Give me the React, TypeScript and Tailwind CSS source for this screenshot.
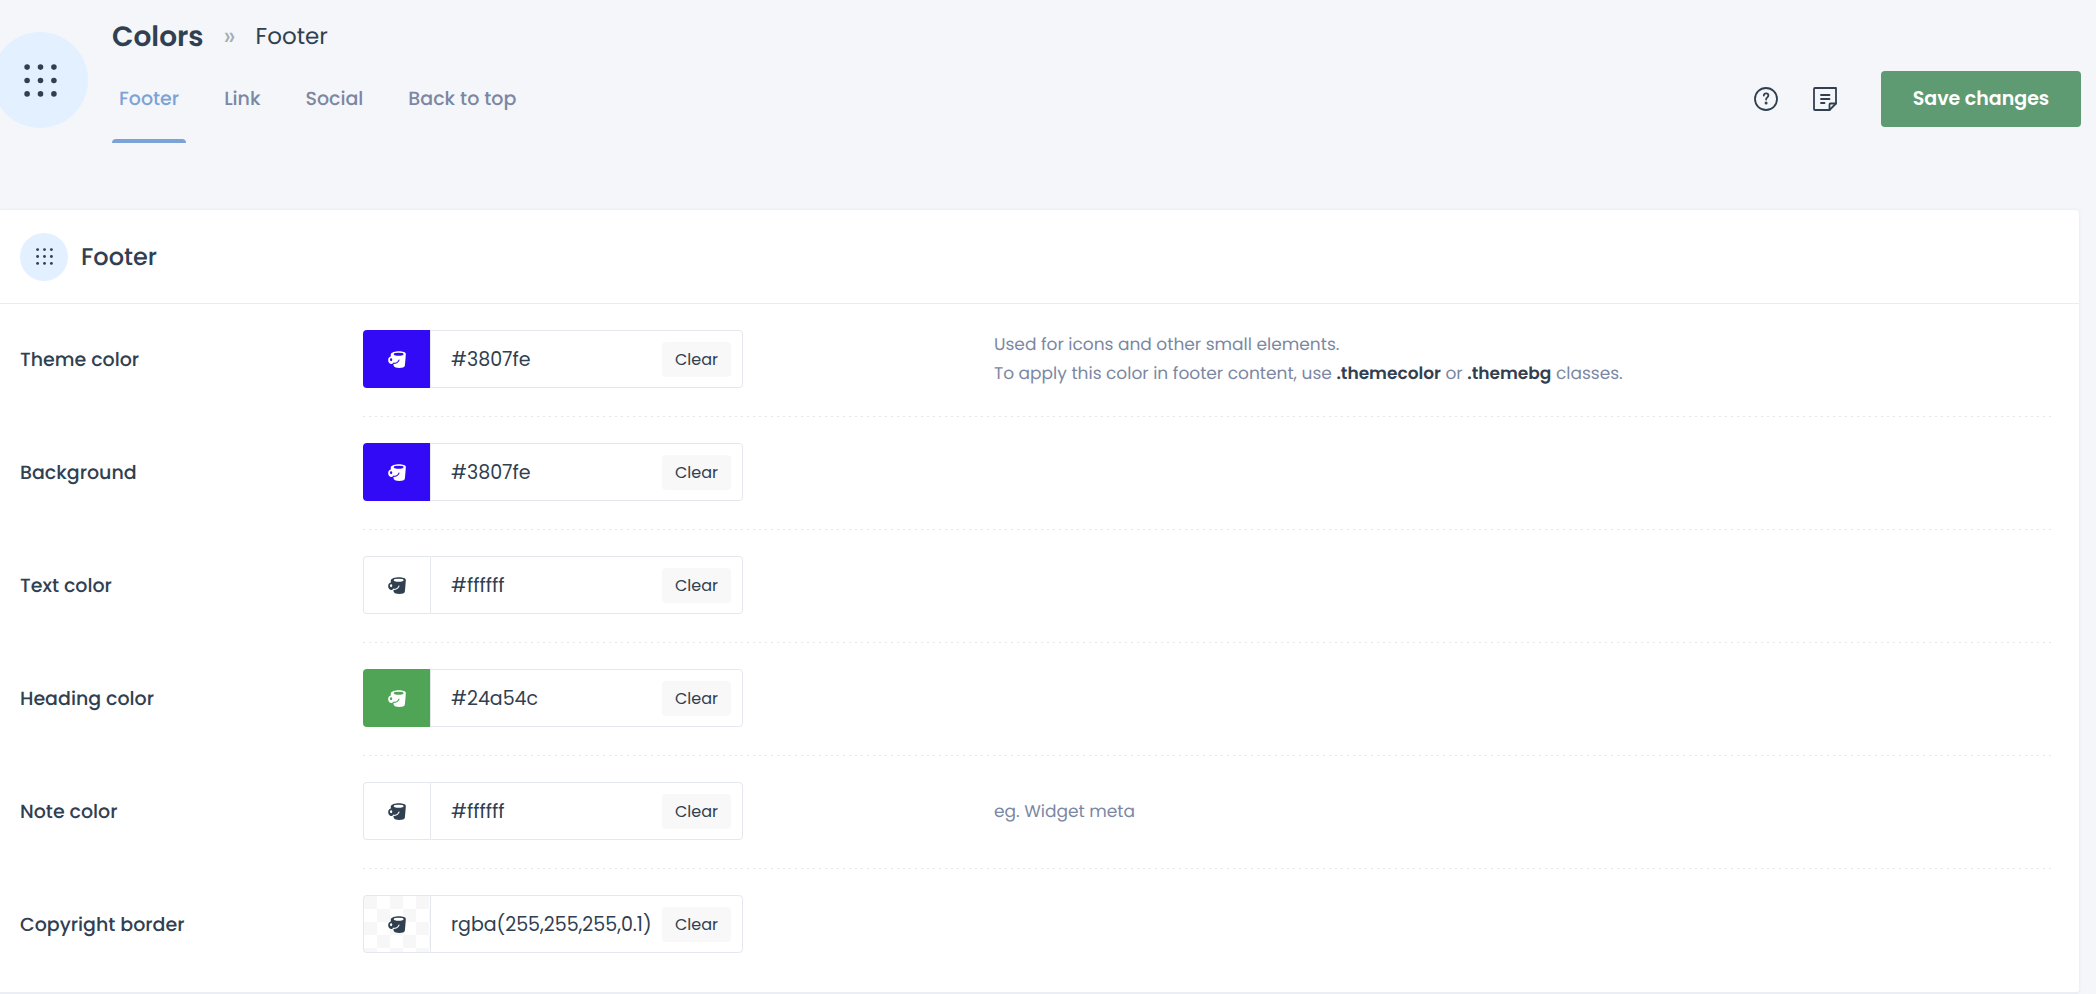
const tabs = [
  { label: 'Footer', href: '#footer', active: true },
  { label: 'Link', href: '#link' },
  { label: 'Social', href: '#social' },
  { label: 'Back to top', href: '#back-to-top' },
];

const themeHint = (
  <>
    Used for icons and other small elements.
    <br />
    To apply this color in footer content, use <strong className="font-semibold text-[#304050]">.themecolor</strong> or{' '}
    <strong className="font-semibold text-[#304050]">.themebg</strong> classes.
  </>
);

const plainSwatch = 'border border-r-0 border-[#e4e8ee] bg-white text-[#304050]';

const fields = [
  { id: 'theme', label: 'Theme color', value: '#3807fe', swatch: 'bg-[#330af5] text-white', hole: '#330af5', hint: themeHint },
  { id: 'background', label: 'Background', value: '#3807fe', swatch: 'bg-[#330af5] text-white', hole: '#330af5' },
  { id: 'text', label: 'Text color', value: '#ffffff', swatch: plainSwatch, hole: '#fff' },
  { id: 'heading', label: 'Heading color', value: '#24a54c', swatch: 'bg-[#50a456] text-white', hole: '#50a456' },
  { id: 'note', label: 'Note color', value: '#ffffff', swatch: plainSwatch, hole: '#fff', hint: 'eg. Widget meta' },
  {
    id: 'copyright',
    label: 'Copyright border',
    value: 'rgba(255,255,255,0.1)',
    swatch:
      'border border-r-0 border-[#e4e8ee] bg-[repeating-conic-gradient(#fff_0_25%,#f7f7f7_0_50%)] bg-[length:26px_26px] text-[#304050]',
    hole: '#fff',
  },
];

function DotsIcon({ className }: { className: string }) {
  return (
    <svg viewBox="0 0 32 32" fill="currentColor" className={className} aria-hidden="true">
      {[3, 16, 29].map((y) => [3, 16, 29].map((x) => <circle key={`${x}-${y}`} cx={x} cy={y} r="2.7" />))}
    </svg>
  );
}

function BucketIcon({ hole }: { hole: string }) {
  return (
    <svg viewBox="0 0 54 52" className="h-[17px] w-[18px]" aria-hidden="true">
      <path
        d="M8 10C10 4 21 1 33 1s21 3 21 8c0 1-2 31-3 36-1 4-8 7-17 7-8 0-16-2-17-6l-1-6C7 41 0 36 0 28c0-6 3-10 8-11z"
        fill="currentColor"
      />
      <ellipse cx="32" cy="10" rx="15" ry="4.500" fill={hole} />
      <ellipse cx="9" cy="27" rx="3.500" ry="4.500" fill={hole} />
      <path d="M15 38c9 0 16-4 18-10" fill="none" stroke={hole} strokeWidth="3.500" strokeLinecap="round" />
    </svg>
  );
}

function HelpIcon() {
  return (
    <svg viewBox="0 0 24 24" fill="none" stroke="currentColor" strokeWidth="1.800" strokeLinecap="round" className="size-6">
      <circle cx="12" cy="12" r="11" />
      <path d="M9.800 8.600c0-2.900 4.600-2.900 4.600 0 0 1.800-2.300 1.900-2.300 3.900" />
      <circle cx="12.100" cy="16" r="0.600" fill="currentColor" />
    </svg>
  );
}

function NoteIcon() {
  return (
    <svg
      viewBox="0 0 24 24"
      fill="none"
      stroke="currentColor"
      strokeWidth="1.800"
      strokeLinecap="round"
      strokeLinejoin="round"
      className="size-6"
    >
      <path d="M1 2c0-.6.400-1 1-1h21v15.500L16.500 23H2c-.6 0-1-.4-1-1z" />
      <path d="M16.500 23v-5.500c0-.6.400-1 1-1H23M8 8h8.500M8 12h8.500M8 16h3.500" />
    </svg>
  );
}

function ColorField({ field }: { field: (typeof fields)[number] }) {
  return (
    <div className="group flex pl-5">
      <label htmlFor={field.id} className="flex w-[343px] shrink-0 items-center text-[19px] font-medium">
        {field.label}
      </label>
      <div className="mr-[27px] flex-1">
        <div className="flex items-center pt-[26px] pb-7">
          <div className="w-[631px] shrink-0">
            <div className="flex h-[58px] w-[380px]">
              <button
                type="button"
                aria-label={`Pick ${field.label}`}
                className={`flex w-[67px] shrink-0 items-center justify-center rounded-l ${field.swatch}`}
              >
                <BucketIcon hole={field.hole} />
              </button>
              <div className="flex min-w-0 flex-1 items-center rounded-r border border-[#e4e8ee] pr-[11px]">
                <input
                  id={field.id}
                  type="text"
                  defaultValue={field.value}
                  className="h-full min-w-0 flex-1 pl-5 text-[19px] outline-none"
                />
                <button
                  type="button"
                  className="flex h-[35px] w-[69px] shrink-0 items-center justify-center rounded bg-[#f8f8f8] pt-px text-[16px]"
                >
                  Clear
                </button>
              </div>
            </div>
          </div>
          {field.hint && <p className="text-[17px] leading-[29px] text-[#7b87a3]">{field.hint}</p>}
        </div>
        <div className="h-px bg-[repeating-linear-gradient(90deg,#e6e7e9_0_2px,transparent_2px_6px)] group-last:hidden" />
      </div>
    </div>
  );
}

export default function App() {
  return (
    <div className="min-h-screen bg-[#f4f6f9] font-['Poppins','Inter',sans-serif] text-[#304050] [text-rendering:geometricPrecision]">
      <header className="flex h-[210px] items-start overflow-hidden pr-[15px]">
        <div className="mt-8 -ml-2 flex size-24 shrink-0 items-center justify-center rounded-full bg-[#e3f0ff]">
          <DotsIcon className="size-[33px]" />
        </div>

        <div className="ml-6 pt-[19px]">
          <div className="flex h-9 items-center">
            <h1 className="text-[28px] font-semibold">Colors</h1>
            <span className="mx-5 text-[26px] text-[#a5adb6]">»</span>
            <span className="text-[23px]">Footer</span>
          </div>
          <nav className="flex gap-[31px]">
            {tabs.map((tab) => (
              <a
                key={tab.label}
                href={tab.href}
                className={`flex h-[88px] flex-col px-[7px] text-[19px] font-medium ${
                  tab.active ? 'text-[#7ca3d6]' : 'text-[#7b87a3]'
                }`}
              >
                <span className="flex h-[84px] items-center pt-1">{tab.label}</span>
                {tab.active && <span className="-mx-[7px] h-1 rounded-t bg-[#7ca3d6]" />}
              </a>
            ))}
          </nav>
        </div>

        <div className="ml-auto flex items-center pt-[71px]">
          <button type="button" aria-label="Help">
            <HelpIcon />
          </button>
          <button type="button" aria-label="Notes" className="ml-[35px]">
            <NoteIcon />
          </button>
          <button type="button" className="ml-11 h-14 w-[200px] rounded bg-[#5e9b72] text-[19px] font-semibold text-white">
            Save changes
          </button>
        </div>
      </header>

      <main className="mr-[17px] rounded-r border-b-2 border-[#ebeff5] bg-white pb-[11px] shadow-[0_0_3px_#dfe5ee]">
        <div className="flex h-[94px] items-center border-b border-[#eaecf4] pl-5">
          <div className="flex size-12 items-center justify-center rounded-full bg-[#e3f0ff]">
            <DotsIcon className="size-[17px]" />
          </div>
          <h2 className="ml-[13px] pt-0.5 text-2xl font-medium">Footer</h2>
        </div>
        {fields.map((field) => (
          <ColorField key={field.id} field={field} />
        ))}
      </main>
    </div>
  );
}
